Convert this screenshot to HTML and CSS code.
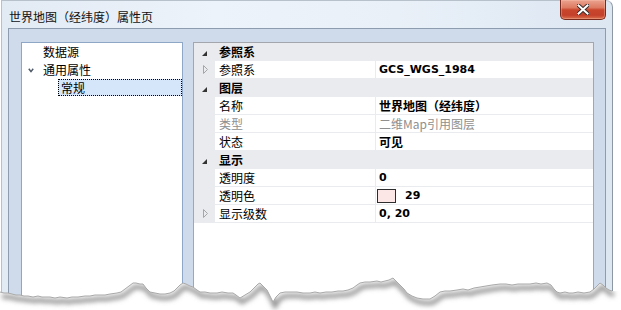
FILE: index.html
```html
<!DOCTYPE html>
<html lang="zh-CN">
<head>
<meta charset="utf-8">
<title>世界地图（经纬度）属性页</title>
<link rel="stylesheet" href="styles.css">
</head>
<body>
<div class="page">
  <div class="window">
    <div class="titlebar">
      <div class="title">世界地图（经纬度）属性页</div>
      <div class="close">
        <svg width="12" height="11" viewBox="0 0 12 11">
          <path d="M1.5 1.5 L10.5 9.5 M10.5 1.5 L1.5 9.5" stroke="#3a2a2a" stroke-width="4" stroke-linecap="square" fill="none"/>
          <path d="M1.5 1.5 L10.5 9.5 M10.5 1.5 L1.5 9.5" stroke="#fff" stroke-width="2" stroke-linecap="square" fill="none"/>
        </svg>
      </div>
    </div>
    <div class="client">
      <div class="tree">
        <div class="item">数据源</div>
        <div class="item item-toggle">
          <svg class="chev" width="6" height="5" viewBox="0 0 6 5"><polyline points="0.8,0.8 3,3.6 5.2,0.8" fill="none" stroke="#4e5866" stroke-width="1.5"/></svg>
          <span>通用属性</span>
        </div>
        <div class="item item-sub"><span class="sel">常规</span></div>
      </div>
      <div class="grid">
        <div class="cat"><div class="gut"><svg width="5" height="5" viewBox="0 0 5 5"><polygon points="5,0 5,5 0,5" fill="#333"/></svg></div><div class="cat-label">参照系</div></div>
        <div class="row"><div class="gut gut-open"><svg width="6" height="9" viewBox="0 0 6 9"><polygon points="0.5,0.5 4.5,4.5 0.5,8.5" fill="none" stroke="#a6a6a6"/></svg></div><div class="name">参照系</div><div class="val">GCS_WGS_1984</div></div>
        <div class="cat"><div class="gut"><svg width="5" height="5" viewBox="0 0 5 5"><polygon points="5,0 5,5 0,5" fill="#333"/></svg></div><div class="cat-label">图层</div></div>
        <div class="row"><div class="gut"></div><div class="name">名称</div><div class="val cjk">世界地图（经纬度）</div></div>
        <div class="row"><div class="gut"></div><div class="name dim">类型</div><div class="val dim">二维Map引用图层</div></div>
        <div class="row"><div class="gut"></div><div class="name">状态</div><div class="val cjk">可见</div></div>
        <div class="cat"><div class="gut"><svg width="5" height="5" viewBox="0 0 5 5"><polygon points="5,0 5,5 0,5" fill="#333"/></svg></div><div class="cat-label">显示</div></div>
        <div class="row"><div class="gut"></div><div class="name">透明度</div><div class="val">0</div></div>
        <div class="row"><div class="gut"></div><div class="name">透明色</div><div class="val"><span class="swatch"></span><span>29</span></div></div>
        <div class="row"><div class="gut gut-open"><svg width="6" height="9" viewBox="0 0 6 9"><polygon points="0.5,0.5 4.5,4.5 0.5,8.5" fill="none" stroke="#a6a6a6"/></svg></div><div class="name">显示级数</div><div class="val">0, 20</div></div>
      </div>
    </div>
  </div>
  <svg class="torn" width="621" height="310" viewBox="0 0 621 310">
    <defs>
      <filter id="blur" x="-5%" y="-50%" width="110%" height="200%"><feGaussianBlur stdDeviation="2.4"/></filter>
      <clipPath id="below"><polygon points="0,292 4,293 8,293 12,294 16,295 20,295 24,296 28,296 33,297 38,296 42,297 46,297 50,297 55,298 60,297 67,298 72,297 78,297 85,296 90,296 95,295 100,295 105,295 110,294 117,293 121,292 125,289 129,286 133,283 136,283 140,284 143,284 146,288 150,292 155,293 160,294 165,294 170,293 174,291 177,288 180,285 183,283 186,284 190,286 193,287 197,290 200,292 205,292 210,293 217,293 222,292 228,293 233,293 236,295 240,298 245,295 250,292 255,287 258,284 260,283 263,286 267,290 270,296 273,302 276,297 280,293 285,292 290,292 297,292 303,293 310,293 315,292 320,293 326,292 332,292 338,291 343,291 348,290 353,288 357,285 360,283 365,282 370,282 377,281 381,282 385,281 389,280 393,278 396,281 400,285 404,289 407,293 412,296 417,298 423,299 430,299 435,296 440,292 445,291 450,291 457,290 463,289 468,290 474,288 480,287 486,286 492,285 500,284 506,284 512,285 518,284 524,284 530,284 536,283 541,284 547,283 551,285 554,289 557,292 560,293 565,292 569,293 573,293 578,292 584,293 590,292 594,289 597,286 600,283 603,285 606,288 609,290 612,291 621,291 621,310 0,310"/></clipPath>
    </defs>
    <polygon points="0,292 4,293 8,293 12,294 16,295 20,295 24,296 28,296 33,297 38,296 42,297 46,297 50,297 55,298 60,297 67,298 72,297 78,297 85,296 90,296 95,295 100,295 105,295 110,294 117,293 121,292 125,289 129,286 133,283 136,283 140,284 143,284 146,288 150,292 155,293 160,294 165,294 170,293 174,291 177,288 180,285 183,283 186,284 190,286 193,287 197,290 200,292 205,292 210,293 217,293 222,292 228,293 233,293 236,295 240,298 245,295 250,292 255,287 258,284 260,283 263,286 267,290 270,296 273,302 276,297 280,293 285,292 290,292 297,292 303,293 310,293 315,292 320,293 326,292 332,292 338,291 343,291 348,290 353,288 357,285 360,283 365,282 370,282 377,281 381,282 385,281 389,280 393,278 396,281 400,285 404,289 407,293 412,296 417,298 423,299 430,299 435,296 440,292 445,291 450,291 457,290 463,289 468,290 474,288 480,287 486,286 492,285 500,284 506,284 512,285 518,284 524,284 530,284 536,283 541,284 547,283 551,285 554,289 557,292 560,293 565,292 569,293 573,293 578,292 584,293 590,292 594,289 597,286 600,283 603,285 606,288 609,290 612,291 621,291 621,310 0,310" fill="#fff"/>
    <g clip-path="url(#below)">
      <polyline transform="translate(2,4)" filter="url(#blur)" fill="none" stroke="#8a8a8a" stroke-width="4" points="0,292 4,293 8,293 12,294 16,295 20,295 24,296 28,296 33,297 38,296 42,297 46,297 50,297 55,298 60,297 67,298 72,297 78,297 85,296 90,296 95,295 100,295 105,295 110,294 117,293 121,292 125,289 129,286 133,283 136,283 140,284 143,284 146,288 150,292 155,293 160,294 165,294 170,293 174,291 177,288 180,285 183,283 186,284 190,286 193,287 197,290 200,292 205,292 210,293 217,293 222,292 228,293 233,293 236,295 240,298 245,295 250,292 255,287 258,284 260,283 263,286 267,290 270,296 273,302 276,297 280,293 285,292 290,292 297,292 303,293 310,293 315,292 320,293 326,292 332,292 338,291 343,291 348,290 353,288 357,285 360,283 365,282 370,282 377,281 381,282 385,281 389,280 393,278 396,281 400,285 404,289 407,293 412,296 417,298 423,299 430,299 435,296 440,292 445,291 450,291 457,290 463,289 468,290 474,288 480,287 486,286 492,285 500,284 506,284 512,285 518,284 524,284 530,284 536,283 541,284 547,283 551,285 554,289 557,292 560,293 565,292 569,293 573,293 578,292 584,293 590,292 594,289 597,286 600,283 603,285 606,288 609,290 612,291"/>
    </g>
    <polyline fill="none" stroke="#a9a9a9" stroke-width="1" points="0,292 4,293 8,293 12,294 16,295 20,295 24,296 28,296 33,297 38,296 42,297 46,297 50,297 55,298 60,297 67,298 72,297 78,297 85,296 90,296 95,295 100,295 105,295 110,294 117,293 121,292 125,289 129,286 133,283 136,283 140,284 143,284 146,288 150,292 155,293 160,294 165,294 170,293 174,291 177,288 180,285 183,283 186,284 190,286 193,287 197,290 200,292 205,292 210,293 217,293 222,292 228,293 233,293 236,295 240,298 245,295 250,292 255,287 258,284 260,283 263,286 267,290 270,296 273,302 276,297 280,293 285,292 290,292 297,292 303,293 310,293 315,292 320,293 326,292 332,292 338,291 343,291 348,290 353,288 357,285 360,283 365,282 370,282 377,281 381,282 385,281 389,280 393,278 396,281 400,285 404,289 407,293 412,296 417,298 423,299 430,299 435,296 440,292 445,291 450,291 457,290 463,289 468,290 474,288 480,287 486,286 492,285 500,284 506,284 512,285 518,284 524,284 530,284 536,283 541,284 547,283 551,285 554,289 557,292 560,293 565,292 569,293 573,293 578,292 584,293 590,292 594,289 597,286 600,283 603,285 606,288 609,290 612,291"/>
  </svg>
</div>
</body>
</html>
```

FILE: styles.css
```css
* { box-sizing: border-box; }
html, body { margin: 0; padding: 0; background: #fff; }
body {
  font-family: "Noto Sans CJK SC", "Open Sans", sans-serif;
  font-size: 12px;
  color: #000;
}
.page {
  position: relative;
  width: 621px;
  height: 310px;
  overflow: hidden;
}
.window {
  margin-left: 1px;
  width: 612px;
  height: 310px;
  display: flex;
  flex-direction: column;
  background: linear-gradient(to right, #e2eaf4 0%, #edf3fa 35%, #e9f0f8 65%, #dde7f2 100%);
  border: 1px solid #b7c1cc;
  border-right-color: #8d97a3;
  border-bottom: none;
  border-top-right-radius: 7px;
}
.titlebar {
  height: 27px;
  flex: none;
  display: flex;
  align-items: flex-start;
  padding-left: 7px;
}
.title {
  margin-top: 8px;
  line-height: 15px;
  color: #111;
}
.close {
  margin-left: auto;
  margin-right: 6px;
  margin-top: -1px;
  width: 46px;
  height: 20px;
  display: flex;
  align-items: center;
  justify-content: center;
  border: 1px solid #7a2a1c;
  border-top: none;
  border-radius: 0 0 5px 5px;
  background: linear-gradient(to bottom, #eaa390 0%, #de7a62 40%, #c9462c 52%, #c4402a 80%, #d9704e 100%);
  box-shadow: inset 0 0 0 1px rgba(255, 200, 180, 0.35);
}
.client {
  flex: 1;
  margin: 0 6px;
  border: 1px solid #8e9cb0;
  border-bottom: none;
  background: #cfdbeb;
  padding: 13px 11px 0 12px;
  display: flex;
  gap: 10px;
  min-height: 0;
}
.tree {
  width: 162px;
  flex: none;
  background: #fff;
  border: 1px solid #8ea7c6;
  border-bottom: none;
}
.item {
  height: 18px;
  display: flex;
  align-items: center;
  padding-left: 21px;
  line-height: 16px;
}
.item-toggle { padding-left: 6px; }
.chev { margin-right: 9px; }
.item-sub { padding-left: 36px; }
.sel {
  flex: 1;
  height: 17px;
  align-self: flex-start;
  display: flex;
  align-items: center;
  padding-left: 2px;
  background: #d5e6fb;
  border: 1px dotted #000;
}
.grid {
  width: 401px;
  flex: none;
  background: #fff;
  border: 1px solid #a3a7ad;
  border-bottom: none;
  overflow: hidden;
}
.cat {
  height: 18px;
  display: flex;
  align-items: center;
  background: #e9ebef;
}
.cat-label {
  padding-left: 4px;
  font-weight: bold;
  line-height: 16px;
}
.gut {
  width: 21px;
  flex: none;
  display: flex;
  align-items: center;
  padding-left: 8px;
  padding-top: 2px;
}
.gut-open { padding-left: 9px; padding-top: 0; }
.row {
  height: 18px;
  display: flex;
  background: #e9ebef;
}
.row .gut { height: 17px; }
.name {
  width: 160px;
  flex: none;
  height: 17px;
  background: #fff;
  padding-left: 4px;
  line-height: 17px;
}
.val {
  flex: 1;
  margin-left: 1px;
  height: 17px;
  background: #fff;
  padding-left: 3px;
  font-family: "DejaVu Sans", "Noto Sans CJK SC", sans-serif;
  font-size: 11px;
  font-weight: bold;
  line-height: 17px;
  display: flex;
  align-items: center;
}
.val.cjk {
  font-family: "Noto Sans CJK SC", sans-serif;
  font-size: 12px;
}
.dim { color: #8f8f8f; font-weight: normal; }
.val.dim { font-family: "Noto Sans CJK SC", sans-serif; font-size: 12px; }
.swatch {
  width: 19px;
  height: 14px;
  margin-left: -2px;
  margin-right: 9px;
  background: #fde6e6;
  border: 1px solid #2d2d2d;
}
.torn {
  position: absolute;
  left: 0;
  top: 0;
  pointer-events: none;
}
```
